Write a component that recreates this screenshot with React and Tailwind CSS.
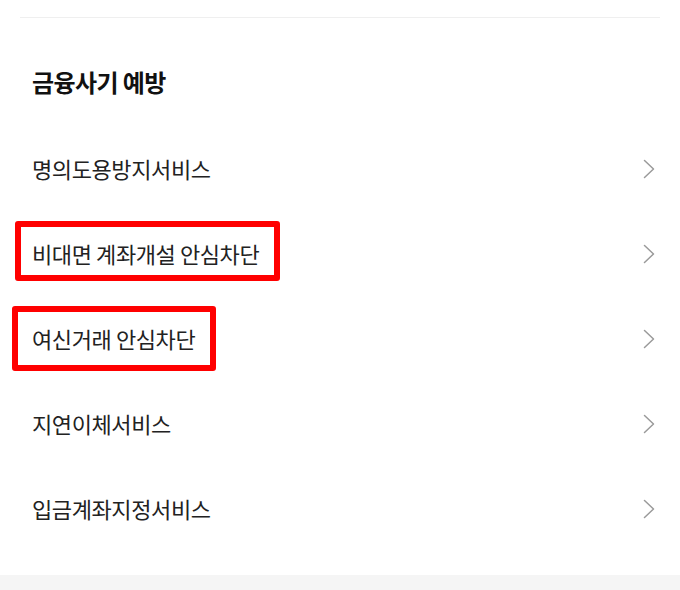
import React from 'react';

const items = [
  { label: '명의도용방지서비스' },
  { label: '비대면 계좌개설 안심차단', mark: 'left-[15px] top-[10px] w-[265px] h-[60px]' },
  { label: '여신거래 안심차단', mark: 'left-[12px] top-[10px] w-[204px] h-[65px]' },
  { label: '지연이체서비스' },
  { label: '입금계좌지정서비스' },
];

const Chevron = () => (
  <svg className="w-[12px] h-[20px]" viewBox="0 0 12 20" fill="none">
    <path d="M1.5 1.5L10.5 10L1.5 18.5" stroke="#9a9a9a" strokeWidth="1.5" strokeLinecap="round" strokeLinejoin="round" />
  </svg>
);

const App = () => {
  return (
    <div className="w-[680px] h-[590px] bg-white flex flex-col overflow-hidden" style={{ fontFamily: '"Noto Sans CJK KR", "Noto Sans", sans-serif' }}>
      {/* Top divider */}
      <div className="pt-[17px] px-[20px]">
        <div className="h-px bg-[#efefef]" />
      </div>

      {/* Section title */}
      <div className="px-[32px] pt-[46px] pb-[26px]">
        <h2 className="text-[24px] leading-[36px] font-bold text-[#111] tracking-[-0.6px]">금융사기 예방</h2>
      </div>

      {/* Menu list */}
      <ul className="flex flex-col">
        {items.map((item) => (
          <li key={item.label} className="relative h-[85px] flex items-center justify-between pl-[32px] pr-[25px]">
            <span className="text-[22px] text-[#222] tracking-[-0.4px]">{item.label}</span>
            <Chevron />
            {item.mark && (
              <div className={`absolute border-[6px] border-[#f00] rounded-[3px] ${item.mark}`} />
            )}
          </li>
        ))}
      </ul>

      <div className="flex-1" />
      <div className="h-[15px] bg-[#f5f5f5]" />
    </div>
  );
};

export default App;
